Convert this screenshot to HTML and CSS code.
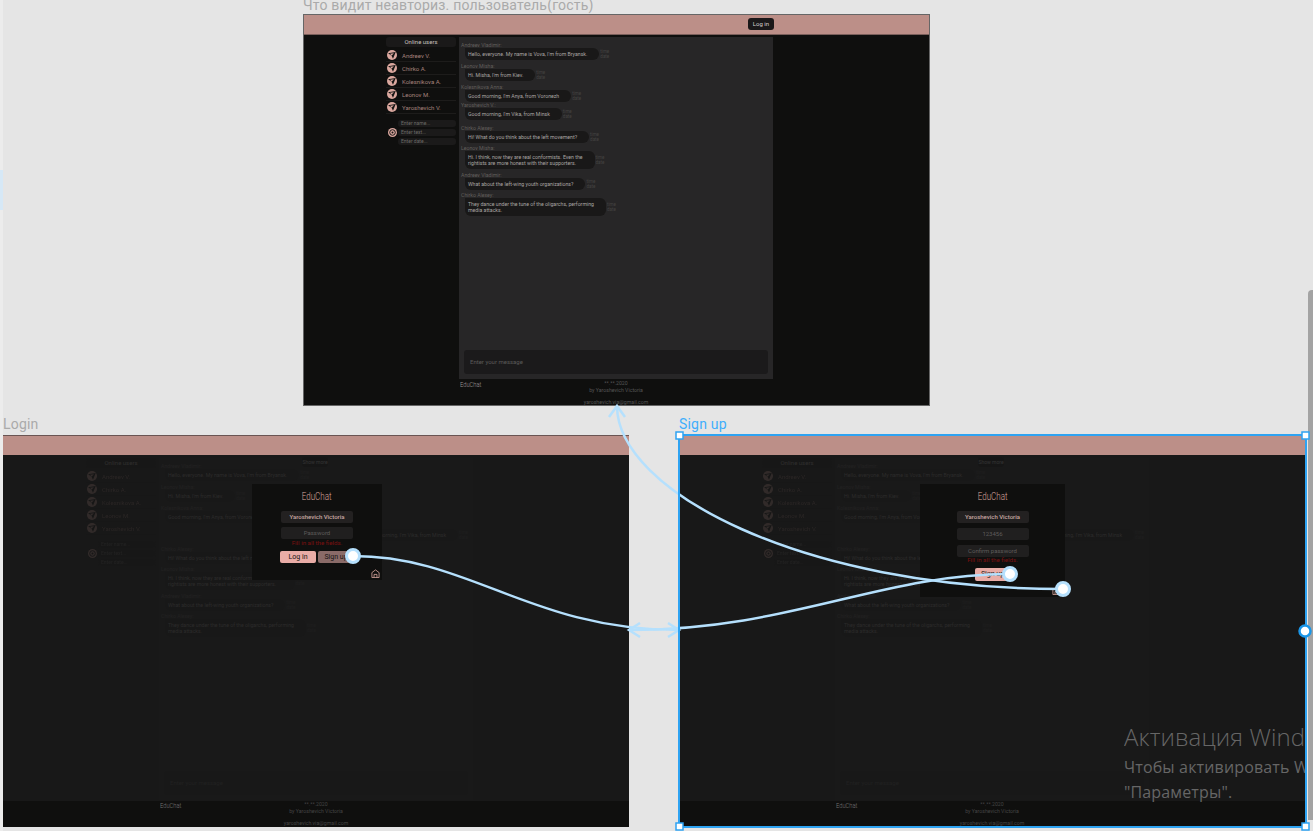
FILE: index.html
```html
<!DOCTYPE html>
<html lang="ru">
<head>
<meta charset="utf-8">
<title>EduChat</title>
<link rel="stylesheet" href="styles.css">
</head>
<body>
<svg class="defs" width="0" height="0">
  <symbol id="tg" viewBox="0 0 11 11">
    <circle cx="5.5" cy="5.5" r="5.5" fill="#dba89f"/>
    <path d="M1.2 3.6 L9.6 2.2 L6.6 9.6 L5 6.2 Z" fill="#151413"/>
    <path d="M3.4 4.2 L7.6 3.6 L5 6.2 Z" fill="#dba89f"/>
  </symbol>
  <symbol id="face" viewBox="0 0 11 11">
    <circle cx="5.5" cy="5.5" r="5.5" fill="#dba89f"/>
    <circle cx="5.5" cy="5.5" r="3.4" fill="none" stroke="#151413" stroke-width="1.2"/>
    <circle cx="5.5" cy="5.5" r="1.2" fill="#151413"/>
  </symbol>
  <symbol id="home" viewBox="0 0 10 10">
    <path d="M1 9.5 V4 L5 1 L9 4 V9.5 Z M3.4 9.5 V6 H6.6 V9.5" fill="none" stroke="#dba89f" stroke-width="0.9"/>
  </symbol>
</svg>

<main class="canvas">
  <div class="edge"><div class="edge-mark"></div></div>
  <div class="scrollbar"></div>

  <div class="label label-guest">Что видит неавториз. пользователь(гость)</div>
  <div class="label label-login">Login</div>
  <div class="label label-signup">Sign up</div>

  <section class="frame frame-guest">
    <header class="topbar"><button class="topbar-login">Log in</button></header>
    <div class="main">
      <aside class="sidebar">
        <div class="side-title">Online users</div>
        <div class="user"><svg class="user-icon"><use href="#tg"/></svg>Andreev V.</div>
        <div class="user"><svg class="user-icon"><use href="#tg"/></svg>Chirko A.</div>
        <div class="user"><svg class="user-icon"><use href="#tg"/></svg>Kolesnikova A.</div>
        <div class="user"><svg class="user-icon"><use href="#tg"/></svg>Leonov M.</div>
        <div class="user"><svg class="user-icon"><use href="#tg"/></svg>Yaroshevich V.</div>
        <div class="add-user">
          <svg class="add-icon"><use href="#face"/></svg>
          <div class="add-fields">
            <div class="add-field">Enter name...</div>
            <div class="add-field">Enter text...</div>
            <div class="add-field">Enter date...</div>
          </div>
        </div>
      </aside>
      <section class="panel">
        <div class="messages">
          <div class="msg"><div class="msg-name">Andreev Vladimir:</div><div class="msg-row"><div class="bubble">Hello, everyone. My name is Vova, I'm from Bryansk.</div><div class="stamp">time<br>date</div></div></div>
          <div class="msg"><div class="msg-name">Leonov Misha:</div><div class="msg-row"><div class="bubble">Hi. Misha, I'm from Kiev.</div><div class="stamp">time<br>date</div></div></div>
          <div class="msg gap-0"><div class="msg-name">Kolesnikova Anna:</div><div class="msg-row"><div class="bubble">Good morning, I'm Anya, from Voronezh</div><div class="stamp">time<br>date</div></div></div>
          <div class="msg gap-5"><div class="msg-name">Yaroshevich V.:</div><div class="msg-row"><div class="bubble">Good morning, I'm Vika, from Minsk</div><div class="stamp">time<br>date</div></div></div>
          <div class="msg gap-2"><div class="msg-name">Chirko Alexey:</div><div class="msg-row"><div class="bubble">Hi! What do you think about the left movement?</div><div class="stamp">time<br>date</div></div></div>
          <div class="msg"><div class="msg-name">Leonov Misha:</div><div class="msg-row"><div class="bubble">Hi. I think, now they are real conformists. Even the<br>rightists are more honest with their supporters.</div><div class="stamp">time<br>date</div></div></div>
          <div class="msg gap-2"><div class="msg-name">Andreev Vladimir:</div><div class="msg-row"><div class="bubble">What about the left-wing youth organizations?</div><div class="stamp">time<br>date</div></div></div>
          <div class="msg"><div class="msg-name">Chirko Alexey:</div><div class="msg-row"><div class="bubble">They dance under the tune of the oligarchs, performing<br>media attacks.</div><div class="stamp">time<br>date</div></div></div>
        </div>
        <div class="composer">Enter your message</div>
      </section>
    </div>
    <footer class="footer">
      <div class="footer-brand">EduChat</div>
      <div class="footer-info"><div>**.**.2020</div><div>by Yaroshevich Victoria</div><div class="footer-mail">yaroshevich.via@gmail.com</div></div>
    </footer>
  </section>

  <section class="frame frame-login frame-dim">
    <header class="topbar"></header>
    <div class="main">
      <aside class="sidebar">
        <div class="side-title">Online users</div>
        <div class="user"><svg class="user-icon"><use href="#tg"/></svg>Andreev V.</div>
        <div class="user"><svg class="user-icon"><use href="#tg"/></svg>Chirko A.</div>
        <div class="user"><svg class="user-icon"><use href="#tg"/></svg>Kolesnikova A.</div>
        <div class="user"><svg class="user-icon"><use href="#tg"/></svg>Leonov M.</div>
        <div class="user"><svg class="user-icon"><use href="#tg"/></svg>Yaroshevich V.</div>
        <div class="add-user">
          <svg class="add-icon"><use href="#face"/></svg>
          <div class="add-fields">
            <div class="add-field">Enter name...</div>
            <div class="add-field">Enter text...</div>
            <div class="add-field">Enter date...</div>
          </div>
        </div>
      </aside>
      <section class="panel">
        <div class="show-more">Show more</div>
        <div class="messages">
          <div class="msg"><div class="msg-name">Andreev Vladimir:</div><div class="msg-row"><div class="bubble">Hello, everyone. My name is Vova, I'm from Bryansk.</div><div class="stamp">time<br>date</div></div></div>
          <div class="msg"><div class="msg-name">Leonov Misha:</div><div class="msg-row"><div class="bubble">Hi. Misha, I'm from Kiev.</div><div class="stamp">time<br>date</div></div></div>
          <div class="msg gap-0"><div class="msg-name">Kolesnikova Anna:</div><div class="msg-row"><div class="bubble">Good morning, I'm Anya, from Voronezh</div><div class="stamp">time<br>date</div></div></div>
          <div class="msg gap-5 msg-own"><div class="msg-row"><div class="bubble">Good morning, I'm Vika, from Minsk</div><div class="stamp">time<br>date</div></div></div>
          <div class="msg gap-2"><div class="msg-name">Chirko Alexey:</div><div class="msg-row"><div class="bubble">Hi! What do you think about the left movement?</div><div class="stamp">time<br>date</div></div></div>
          <div class="msg"><div class="msg-name">Leonov Misha:</div><div class="msg-row"><div class="bubble">Hi. I think, now they are real conformists. Even the<br>rightists are more honest with their supporters.</div><div class="stamp">time<br>date</div></div></div>
          <div class="msg gap-2"><div class="msg-name">Andreev Vladimir:</div><div class="msg-row"><div class="bubble">What about the left-wing youth organizations?</div><div class="stamp">time<br>date</div></div></div>
          <div class="msg"><div class="msg-name">Chirko Alexey:</div><div class="msg-row"><div class="bubble">They dance under the tune of the oligarchs, performing<br>media attacks.</div><div class="stamp">time<br>date</div></div></div>
        </div>
        <div class="composer">Enter your message</div>
      </section>
    </div>
    <footer class="footer">
      <div class="footer-brand">EduChat</div>
      <div class="footer-info"><div>**.**.2020</div><div>by Yaroshevich Victoria</div><div class="footer-mail">yaroshevich.via@gmail.com</div></div>
    </footer>
    <div class="modal modal-login">
      <div class="modal-title">EduChat</div>
      <div class="field field-filled">Yaroshevich Victoria</div>
      <div class="field">Password</div>
      <div class="modal-error">Fill in all the fields.</div>
      <div class="modal-actions">
        <div class="btn btn-primary">Log in</div>
        <div class="btn btn-muted">Sign up</div>
      </div>
      <svg class="modal-home"><use href="#home"/></svg>
    </div>
  </section>

  <section class="frame frame-signup frame-dim">
    <header class="topbar"></header>
    <div class="main">
      <aside class="sidebar">
        <div class="side-title">Online users</div>
        <div class="user"><svg class="user-icon"><use href="#tg"/></svg>Andreev V.</div>
        <div class="user"><svg class="user-icon"><use href="#tg"/></svg>Chirko A.</div>
        <div class="user"><svg class="user-icon"><use href="#tg"/></svg>Kolesnikova A.</div>
        <div class="user"><svg class="user-icon"><use href="#tg"/></svg>Leonov M.</div>
        <div class="user"><svg class="user-icon"><use href="#tg"/></svg>Yaroshevich V.</div>
        <div class="add-user">
          <svg class="add-icon"><use href="#face"/></svg>
          <div class="add-fields">
            <div class="add-field">Enter name...</div>
            <div class="add-field">Enter text...</div>
            <div class="add-field">Enter date...</div>
          </div>
        </div>
      </aside>
      <section class="panel">
        <div class="show-more">Show more</div>
        <div class="messages">
          <div class="msg"><div class="msg-name">Andreev Vladimir:</div><div class="msg-row"><div class="bubble">Hello, everyone. My name is Vova, I'm from Bryansk.</div><div class="stamp">time<br>date</div></div></div>
          <div class="msg"><div class="msg-name">Leonov Misha:</div><div class="msg-row"><div class="bubble">Hi. Misha, I'm from Kiev.</div><div class="stamp">time<br>date</div></div></div>
          <div class="msg gap-0"><div class="msg-name">Kolesnikova Anna:</div><div class="msg-row"><div class="bubble">Good morning, I'm Anya, from Voronezh</div><div class="stamp">time<br>date</div></div></div>
          <div class="msg gap-5 msg-own"><div class="msg-row"><div class="bubble">Good morning, I'm Vika, from Minsk</div><div class="stamp">time<br>date</div></div></div>
          <div class="msg gap-2"><div class="msg-name">Chirko Alexey:</div><div class="msg-row"><div class="bubble">Hi! What do you think about the left movement?</div><div class="stamp">time<br>date</div></div></div>
          <div class="msg"><div class="msg-name">Leonov Misha:</div><div class="msg-row"><div class="bubble">Hi. I think, now they are real conformists. Even the<br>rightists are more honest with their supporters.</div><div class="stamp">time<br>date</div></div></div>
          <div class="msg gap-2"><div class="msg-name">Andreev Vladimir:</div><div class="msg-row"><div class="bubble">What about the left-wing youth organizations?</div><div class="stamp">time<br>date</div></div></div>
          <div class="msg"><div class="msg-name">Chirko Alexey:</div><div class="msg-row"><div class="bubble">They dance under the tune of the oligarchs, performing<br>media attacks.</div><div class="stamp">time<br>date</div></div></div>
        </div>
        <div class="composer">Enter your message</div>
      </section>
    </div>
    <footer class="footer">
      <div class="footer-brand">EduChat</div>
      <div class="footer-info"><div>**.**.2020</div><div>by Yaroshevich Victoria</div><div class="footer-mail">yaroshevich.via@gmail.com</div></div>
    </footer>
    <div class="modal modal-signup">
      <div class="modal-title">EduChat</div>
      <div class="field field-filled">Yaroshevich Victoria</div>
      <div class="field">123456</div>
      <div class="field">Confirm password</div>
      <div class="modal-error">Fill in all the fields.</div>
      <div class="modal-actions">
        <div class="btn btn-primary">Sign up</div>
      </div>
      <svg class="modal-home"><use href="#home"/></svg>
    </div>
    <div class="activation">
      <div class="activation-title">Активация Windows</div>
      <div class="activation-text">Чтобы активировать Windows, перейдите в раздел<br>"Параметры".</div>
    </div>
  </section>

  <svg class="wires" width="1313" height="831" viewBox="0 0 1313 831">
    <g class="wire">
      <path d="M353 556 C470 556 530 630 679 630"/>
      <path d="M1010 574 C880 574 790 630 629 630"/>
      <path d="M1063 589 C800 589 617 490 617 406"/>
      <path d="M640 623 L629 630 L640 637"/>
      <path d="M668 623 L679 630 L668 637"/>
      <path d="M609 417 L617 406 L625 417"/>
    </g>
    <circle class="wire-dot" cx="353" cy="556" r="6.5"/>
    <circle class="wire-dot" cx="1010" cy="574" r="6.5"/>
    <circle class="wire-dot" cx="1063" cy="589" r="6.5"/>
    <rect class="select-box" x="679" y="435" width="627" height="392"/>
    <rect class="select-handle" x="676" y="432" width="7" height="7"/>
    <rect class="select-handle" x="1302" y="432" width="7" height="7"/>
    <rect class="select-handle" x="676" y="823" width="7" height="7"/>
    <rect class="select-handle" x="1302" y="823" width="7" height="7"/>
    <circle class="select-dot" cx="1305" cy="631" r="5.5"/>
  </svg>
</main>
</body>
</html>
```

FILE: styles.css
```css
* { box-sizing: border-box; }

html, body {
  margin: 0;
  padding: 0;
  height: 100%;
  overflow: hidden;
  background: #e5e5e5;
  font-family: Roboto, "Liberation Sans", sans-serif;
}

.defs { position: absolute; }

.canvas {
  position: relative;
  width: 1313px;
  height: 831px;
  overflow: hidden;
  background: #e5e5e5;
}

.edge {
  position: absolute;
  left: 0;
  top: 0;
  width: 3px;
  height: 831px;
  background: #ececec;
}
.edge-mark {
  margin-top: 170px;
  height: 40px;
  background: #d6e8f6;
}

.scrollbar {
  position: absolute;
  left: 1308px;
  top: 290px;
  width: 5px;
  height: 530px;
  background: #a3a3a3;
  border-top-left-radius: 4px;
}

.label {
  position: absolute;
  font-size: 14px;
  line-height: 16px;
  letter-spacing: 0.2px;
  color: #aaa;
  white-space: nowrap;
}
.label-guest { left: 303px; top: -3px; }
.label-login { left: 3px; top: 416px; }
.label-signup { left: 679px; top: 416px; color: #40aefc; }

.frame {
  position: absolute;
  width: 627px;
  height: 392px;
  display: flex;
  flex-direction: column;
  background: #0f0f0e;
  overflow: hidden;
}
.frame-guest { left: 303px; top: 14px; outline: 1px solid #666; outline-offset: -1px; }
.frame-login { left: 3px; top: 435px; width: 626px; }
.frame-signup { left: 679px; top: 435px; }
.frame-dim .main { background: #181818; padding-top: 3px; }
.frame-dim .sidebar,
.frame-dim .panel { opacity: 0.13; }

.topbar {
  flex: 0 0 21px;
  display: flex;
  align-items: center;
  padding-left: 445px;
  background: #bc8f88;
  border-bottom: 1px solid #7a5f5b;
}
.frame-dim .topbar {
  flex-basis: 20px;
  border-top: 1px solid #6a5553;
  border-bottom: 0;
}
.topbar-login {
  width: 26px;
  height: 12px;
  padding: 0;
  border: 0;
  border-radius: 3px;
  background: #1a1819;
  color: #d5d0cf;
  font: 400 6px/12px Roboto, sans-serif;
}

.main {
  flex: 1;
  min-height: 0;
  display: flex;
  gap: 3px;
  padding: 2px 0 1px 83px;
}

.sidebar {
  width: 70px;
  display: flex;
  flex-direction: column;
}
.side-title {
  height: 10px;
  margin-bottom: 2px;
  border-radius: 3px;
  background: #1a1919;
  color: #c4c0be;
  font-size: 6px;
  line-height: 10px;
  text-align: center;
}
.user {
  height: 13px;
  display: flex;
  align-items: center;
  gap: 5px;
  padding-left: 1px;
  border-bottom: 1px solid #1d1c1b;
  color: #a5827c;
  font-size: 6px;
  white-space: nowrap;
}
.user-icon { width: 10px; height: 10px; flex: none; }
.add-user {
  display: flex;
  align-items: center;
  margin-top: 6px;
}
.add-icon { width: 9px; height: 9px; flex: none; margin-left: 2px; }
.add-fields {
  flex: 1;
  display: flex;
  flex-direction: column;
  gap: 2px;
  margin-left: 1px;
}
.add-field {
  height: 7px;
  padding-left: 3px;
  border-radius: 3px;
  background: #1b1a1a;
  color: #6d6a68;
  font-size: 5px;
  line-height: 7px;
}

.panel {
  position: relative;
  width: 314px;
  display: flex;
  flex-direction: column;
  padding: 5px 5px 5px 2px;
  background: #272627;
}
.show-more {
  position: absolute;
  left: 143px;
  top: -1px;
  width: 26px;
  height: 10px;
  border-radius: 3px;
  background: #0f0f0f;
  color: #ddd;
  font-size: 5px;
  line-height: 10px;
  text-align: center;
}
.messages { flex: 1; display: flex; flex-direction: column; }
.msg { margin-bottom: 3px; }
.gap-0 { margin-bottom: 0; }
.gap-2 { margin-bottom: 2px; }
.gap-5 { margin-bottom: 5px; }
.msg-name {
  height: 6px;
  color: #625f5c;
  font-size: 5.2px;
  line-height: 6px;
  white-space: nowrap;
}
.msg-row { display: flex; align-items: center; gap: 1px; }
.msg-own { padding-top: 6px; }
.msg-own .msg-row { justify-content: flex-end; }
.bubble {
  min-height: 12px;
  margin-left: 4px;
  padding: 2.5px 12px 2.5px 3px;
  border-radius: 0 6px 6px 6px;
  background: #191818;
  color: #a9a5a3;
  font-size: 5.2px;
  line-height: 6.5px;
  white-space: nowrap;
}
.stamp {
  color: #454342;
  font-size: 4.5px;
  line-height: 5px;
}
.composer {
  height: 24px;
  margin-left: 3px;
  padding-left: 6px;
  border-radius: 3px;
  background: #1b1a1b;
  color: #5c5a5a;
  font-size: 6px;
  line-height: 24px;
}

.footer {
  flex: 0 0 26px;
  display: flex;
  background: #0f0f0e;
  padding-left: 157px;
  color: #555;
}
.footer-brand {
  width: 27px;
  flex: none;
  font-size: 7px;
  font-weight: 300;
  line-height: 10px;
  color: #a09d9b;
  white-space: nowrap;
  transform: scaleX(0.82);
  transform-origin: left;
}
.footer-info {
  width: 258px;
  flex: none;
  text-align: center;
  font-size: 5.2px;
  line-height: 7px;
  white-space: nowrap;
}
.footer-mail { margin-top: 5px; }
.frame-dim .footer-brand { color: #777; }
.frame-dim .footer { color: #444; }

.modal {
  position: absolute;
  top: 49px;
  display: flex;
  flex-direction: column;
  align-items: center;
  background: #0f0f0e;
}
.modal-login { left: 249px; width: 130px; height: 96px; }
.modal-signup { left: 241px; width: 145px; height: 113px; }
.modal-title {
  height: 27px;
  padding-top: 7px;
  color: #dba89f;
  font-size: 10px;
  font-weight: 300;
  line-height: 12px;
  transform: scaleX(0.8);
}
.field {
  width: 72px;
  height: 12px;
  margin-bottom: 4px;
  border-radius: 2px;
  background: #201f1f;
  color: #5f5c5b;
  font-size: 6px;
  line-height: 12px;
  text-align: center;
}
.modal-signup .field { margin-bottom: 5px; }
.field-filled { color: #c9a9a3; font-weight: 500; background: #232121; }
.modal-error {
  height: 8px;
  margin-bottom: 4px;
  margin-top: -4px;
  color: #7c1010;
  font-size: 6.2px;
  line-height: 8px;
}
.modal-signup .modal-error { margin-top: -6px; }
.modal-actions { display: flex; gap: 2px; }
.btn {
  width: 36px;
  height: 12px;
  border-radius: 2px;
  color: #161413;
  font-size: 7px;
  line-height: 12px;
  text-align: center;
}
.modal-signup .btn { height: 13px; line-height: 13px; }
.btn-primary { background: #e9aca6; }
.btn-muted { background: #8a6b68; }
.modal-home {
  position: absolute;
  right: 2px;
  bottom: 2px;
  width: 9px;
  height: 9px;
}
.modal-signup .modal-home { right: 4px; bottom: 2px; }

.activation {
  position: absolute;
  left: 445px;
  top: 287px;
  width: 181px;
  color: #666;
  font-family: "Open Sans", sans-serif;
  white-space: nowrap;
  overflow: hidden;
}
.activation-title { font-size: 24px; font-weight: 300; line-height: 30px; letter-spacing: 0.1px; }
.activation-text { font-size: 16px; line-height: 25px; margin-top: 3px; letter-spacing: 0.15px; }

.wires { position: absolute; left: 0; top: 0; pointer-events: none; }
.wire path { fill: none; stroke: #b5e0fd; stroke-width: 2.5; }
.wire-dot { fill: #fff; stroke: #b5e0fd; stroke-width: 3; }
.select-box { fill: none; stroke: #2ea3f2; stroke-width: 2; }
.select-handle { fill: #fff; stroke: #2ea3f2; stroke-width: 1.5; }
.select-dot { fill: #fff; stroke: #1a96e8; stroke-width: 2.5; }
```
